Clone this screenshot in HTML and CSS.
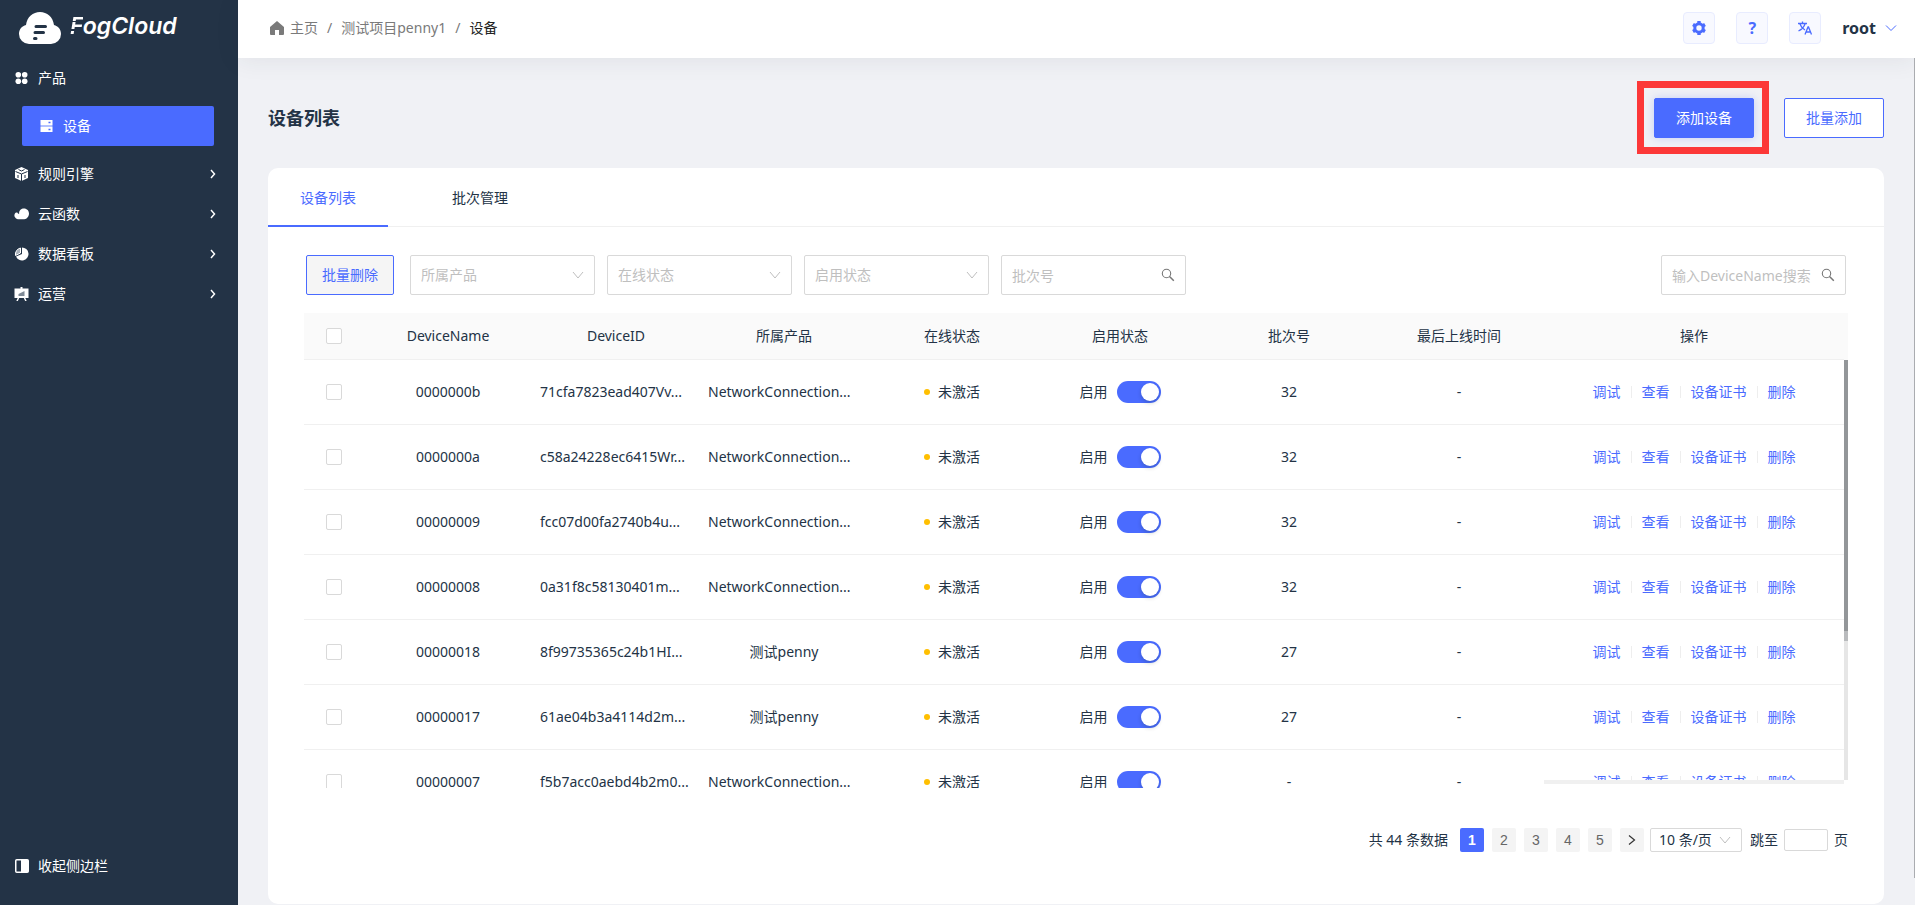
FILE: index.html
```html
<!DOCTYPE html>
<html lang="zh-CN">
<head>
<meta charset="utf-8">
<title>FogCloud</title>
<link rel="stylesheet" href="styles.css">
</head>
<body>
<svg class="defs" aria-hidden="true">
  <symbol id="down" viewBox="0 0 12 12"><path d="M1 3l5 6 5-6" fill="none" stroke="currentColor"/></symbol>
  <symbol id="right" viewBox="0 0 12 12"><path d="M4 2l3.500 4L4 10" fill="none" stroke="currentColor" stroke-width="1.500"/></symbol>
  <symbol id="search" viewBox="0 0 14 14"><circle cx="5.500" cy="5.500" r="4.200" fill="none" stroke="currentColor" stroke-width="1.100"/><path d="M8.500 8.500l4.300 4.300" stroke="currentColor" stroke-width="1.500"/></symbol>
</svg>
<div class="app">
  <aside class="sidebar">
    <a class="logo" href="#">
      <svg width="42" height="32" viewBox="0 0 42 32"><path d="M10 32a10 10 0 0 1-10-10c0-5 3-8 7-9C8 5 14 0 21 0s13 5 14 13c4 1 7 4 7 9a10 10 0 0 1-10 10z" fill="#fff"/><path d="M17 14.500h9.500M16 20.500h8.500M15.500 26.500h1.500" stroke="#233346" stroke-width="3" stroke-linecap="round"/></svg>
      <span class="brand"><span class="brand-f">F</span>ogCloud</span>
    </a>
    <nav class="menu">
      <a class="item" href="#"><svg width="14" height="14" viewBox="0 0 14 14" fill="#fff"><circle cx="3.800" cy="3.800" r="2.800"/><circle cx="10.200" cy="3.800" r="2.800"/><circle cx="3.800" cy="10.200" r="2.800"/><circle cx="10.200" cy="10.200" r="2.800"/></svg><span>产品</span></a>
      <a class="item active" href="#"><svg width="14" height="14" viewBox="0 0 14 14"><path d="M1 1h12v5H1zM1 8h12v5H1z" fill="#fff"/><path d="M1 6h12v2H1z" fill="#b3c2ff"/><path d="M9 3.500h2M9 10.500h2" stroke="#4a6bff" stroke-width="1.500"/></svg><span>设备</span></a>
      <a class="item" href="#"><svg width="14" height="14" viewBox="0 0 14 14"><path d="M7 0l6.500 3v8L7 14 .5 11V3z" fill="#fff"/><path d="M1 4.500L7 7l6-2.500M7 7v7M4 2.500l3 1.500 3-1.500M3.500 8v3M10.500 8v3" stroke="#233346" fill="none"/></svg><span>规则引擎</span><svg class="arrow"><use href="#right"/></svg></a>
      <a class="item" href="#"><svg width="16" height="14" viewBox="0 0 16 14"><path d="M4 12.500a4 4 0 0 1-3-6 2 2 0 0 1 2.500-1C4 6.500 4.500 7 5.500 7 5 3.500 7.500 1 10.500 1 14 1 16 3.500 16 6.500s-2 6-5 6z" fill="#fff"/></svg><span>云函数</span><svg class="arrow"><use href="#right"/></svg></a>
      <a class="item" href="#"><svg width="14" height="14" viewBox="0 0 14 14"><path d="M7.500.5a6.500 6.500 0 1 1-6 9L7.500 7z" fill="#fff"/><path d="M6 1v5L1 8.500A6.500 6.500 0 0 1 6 1z" fill="#a8b0b9" stroke="#fff"/></svg><span>数据看板</span><svg class="arrow"><use href="#right"/></svg></a>
      <a class="item" href="#"><svg width="14" height="14" viewBox="0 0 14 14"><path d="M0 1.500h6V0h2v1.500h6V11H0z" fill="#fff"/><path d="M4 11l-1.500 3M10 11l1.500 3" stroke="#fff" stroke-width="1.500"/><path d="M4 9V7l2-1 4-2v5z" fill="#7f8a96"/></svg><span>运营</span><svg class="arrow"><use href="#right"/></svg></a>
    </nav>
    <button class="collapse" type="button"><svg width="14" height="14" viewBox="0 0 14 14"><rect x=".75" y=".75" width="12.500" height="12.500" rx="1" fill="none" stroke="#fff" stroke-width="1.500"/><path d="M6 1h7v12H6z" fill="#fff"/></svg><span>收起侧边栏</span></button>
  </aside>
  <div class="page">
    <header class="topbar">
      <nav class="crumbs">
        <a href="#"><svg width="14" height="14" viewBox="0 0 14 14"><path d="M7 0l7 6v7a1 1 0 0 1-1 1H9V9H5v5H1a1 1 0 0 1-1-1V6z" fill="#7a7a7a"/></svg>主页</a>
        <span>/</span><a href="#">测试项目penny1</a><span>/</span><b>设备</b>
      </nav>
      <div class="tools">
        <button type="button" aria-label="设置"><svg width="14" height="14" viewBox="0 0 14 14"><circle cx="7" cy="7" r="4.200" fill="none" stroke="#4a6bff" stroke-width="3"/><path d="M7 0v3M7 11v3M1 3.500L3.500 5M10.500 9l2.500 1.500M1 10.500L3.500 9M10.500 5L13 3.500" stroke="#4a6bff" stroke-width="3.400"/></svg></button>
        <button type="button" class="help">?</button>
        <button type="button" aria-label="语言"><svg width="14" height="14" viewBox="0 0 14 14" fill="none" stroke="#4a6bff" stroke-width="1.300"><path d="M0 2.500h9M4.500.5v2M2 3c1 3 3 5 5 6M7 3C6 6 3.500 8.500.5 10M7 13.500l3-7.500h.500l3 7.500M8 11h5"/></svg></button>
        <button type="button" class="user">root<svg width="12" height="12" viewBox="0 0 12 12"><path d="M1 3.500l5 5 5-5" fill="none" stroke="currentColor"/></svg></button>
      </div>
    </header>
    <main class="content">
      <div class="heading">
        <h1>设备列表</h1>
        <div class="marked"><button class="btn primary" type="button">添加设备</button></div>
        <button class="btn" type="button">批量添加</button>
      </div>
      <section class="card">
        <div class="tabs" role="tablist">
          <button class="tab on" type="button" role="tab" aria-selected="true">设备列表</button>
          <button class="tab" type="button" role="tab" aria-selected="false">批次管理</button>
        </div>
        <div class="filters">
          <button class="btn muted" type="button">批量删除</button>
          <label class="field"><select aria-label="所属产品"><option>所属产品</option></select><svg width="12" height="12"><use href="#down"/></svg></label>
          <label class="field"><select aria-label="在线状态"><option>在线状态</option></select><svg width="12" height="12"><use href="#down"/></svg></label>
          <label class="field"><select aria-label="启用状态"><option>启用状态</option></select><svg width="12" height="12"><use href="#down"/></svg></label>
          <label class="field find"><input type="text" placeholder="批次号" aria-label="批次号"><svg width="14" height="14"><use href="#search"/></svg></label>
          <label class="field find last"><input type="text" placeholder="输入DeviceName搜索" aria-label="输入DeviceName搜索"><svg width="14" height="14"><use href="#search"/></svg></label>
        </div>
        <div class="grid">
          <table>
            <colgroup><col class="c-check"><col class="c-data"><col class="c-data"><col class="c-data"><col class="c-data"><col class="c-data"><col><col><col class="c-act"></colgroup>
            <thead><tr><th><input type="checkbox" class="tick" aria-label="全选"></th><th>DeviceName</th><th>DeviceID</th><th>所属产品</th><th>在线状态</th><th>启用状态</th><th>批次号</th><th>最后上线时间</th><th>操作</th></tr></thead>
            <tbody>
              <tr><td><input type="checkbox" class="tick" aria-label="0000000b"></td><td>0000000b</td><td class="long">71cfa7823ead407Vv...</td><td class="long">NetworkConnection...</td><td><span class="state">未激活</span></td><td><label class="toggle">启用<input type="checkbox" role="switch" checked></label></td><td>32</td><td>-</td><td><div class="acts"><a href="#">调试</a><a href="#">查看</a><a href="#">设备证书</a><a href="#">删除</a></div></td></tr>
              <tr><td><input type="checkbox" class="tick" aria-label="0000000a"></td><td>0000000a</td><td class="long">c58a24228ec6415Wr...</td><td class="long">NetworkConnection...</td><td><span class="state">未激活</span></td><td><label class="toggle">启用<input type="checkbox" role="switch" checked></label></td><td>32</td><td>-</td><td><div class="acts"><a href="#">调试</a><a href="#">查看</a><a href="#">设备证书</a><a href="#">删除</a></div></td></tr>
              <tr><td><input type="checkbox" class="tick" aria-label="00000009"></td><td>00000009</td><td class="long">fcc07d00fa2740b4u...</td><td class="long">NetworkConnection...</td><td><span class="state">未激活</span></td><td><label class="toggle">启用<input type="checkbox" role="switch" checked></label></td><td>32</td><td>-</td><td><div class="acts"><a href="#">调试</a><a href="#">查看</a><a href="#">设备证书</a><a href="#">删除</a></div></td></tr>
              <tr><td><input type="checkbox" class="tick" aria-label="00000008"></td><td>00000008</td><td class="long">0a31f8c58130401m...</td><td class="long">NetworkConnection...</td><td><span class="state">未激活</span></td><td><label class="toggle">启用<input type="checkbox" role="switch" checked></label></td><td>32</td><td>-</td><td><div class="acts"><a href="#">调试</a><a href="#">查看</a><a href="#">设备证书</a><a href="#">删除</a></div></td></tr>
              <tr><td><input type="checkbox" class="tick" aria-label="00000018"></td><td>00000018</td><td class="long">8f99735365c24b1HI...</td><td>测试penny</td><td><span class="state">未激活</span></td><td><label class="toggle">启用<input type="checkbox" role="switch" checked></label></td><td>27</td><td>-</td><td><div class="acts"><a href="#">调试</a><a href="#">查看</a><a href="#">设备证书</a><a href="#">删除</a></div></td></tr>
              <tr><td><input type="checkbox" class="tick" aria-label="00000017"></td><td>00000017</td><td class="long">61ae04b3a4114d2m...</td><td>测试penny</td><td><span class="state">未激活</span></td><td><label class="toggle">启用<input type="checkbox" role="switch" checked></label></td><td>27</td><td>-</td><td><div class="acts"><a href="#">调试</a><a href="#">查看</a><a href="#">设备证书</a><a href="#">删除</a></div></td></tr>
              <tr><td><input type="checkbox" class="tick" aria-label="00000007"></td><td>00000007</td><td class="long">f5b7acc0aebd4b2m0...</td><td class="long">NetworkConnection...</td><td><span class="state">未激活</span></td><td><label class="toggle">启用<input type="checkbox" role="switch" checked></label></td><td>-</td><td>-</td><td><div class="acts"><a href="#">调试</a><a href="#">查看</a><a href="#">设备证书</a><a href="#">删除</a></div></td></tr>
            </tbody>
          </table>
          <div class="vbar"></div>
          <div class="hbar"></div>
        </div>
        <nav class="pager">
          <span class="total">共 44 条数据</span>
          <button type="button" class="num current">1</button>
          <button type="button" class="num">2</button>
          <button type="button" class="num">3</button>
          <button type="button" class="num">4</button>
          <button type="button" class="num">5</button>
          <button type="button" class="num next" aria-label="下一页"><svg width="12" height="12" viewBox="0 0 12 12"><path d="M3 1.500L8.500 6 3 10.500" fill="none" stroke="#333" stroke-width="1.200"/></svg></button>
          <label class="size"><select aria-label="每页条数"><option>10 条/页</option></select><svg width="12" height="12"><use href="#down"/></svg></label>
          <label class="jump">跳至<input type="text">页</label>
        </nav>
      </section>
      <div class="pagebar"></div>
    </main>
  </div>
</div>
</body>
</html>
```
FILE: styles.css
```css
* { box-sizing: border-box; }
body {
  margin: 0;
  color: #233346;
  font: 14px/22px "Noto Sans", "Noto Sans CJK SC", sans-serif;
}
button, input, select { font: inherit; color: inherit; margin: 0; }
button { cursor: pointer; }
a { color: inherit; text-decoration: none; }
svg { flex: none; }
.defs { position: absolute; width: 0; height: 0; }
.app { display: flex; height: 100vh; background: #f0f1f5; overflow: hidden; }

.sidebar {
  display: flex;
  flex-direction: column;
  flex: none;
  width: 238px;
  background: #233346;
  color: #fff;
}
.logo { display: flex; gap: 9px; height: 58px; padding: 12px 0 0 19px; }
.brand { font: italic 600 23px/28px Inter, sans-serif; }
.brand-f {
  background: linear-gradient(#fff 9px, #233346 9px, #233346 10px, #fff 10px, #fff 17px, #233346 17px, #233346 19px, #fff 19px);
  background-clip: text;
  color: transparent;
}
.menu { flex: 1; }
.item { display: flex; align-items: center; gap: 9px; height: 40px; padding-left: 14px; }
.item > svg:first-child { width: 15px; }
.item span { flex: 1; }
.item.active {
  margin: 8px 24px 8px 22px;
  padding-left: 17px;
  background: #4a6bff;
  border-radius: 2px;
}
.arrow { width: 12px; height: 12px; margin-right: 19px; }
.collapse {
  display: flex;
  align-items: center;
  gap: 9px;
  height: 40px;
  margin-bottom: 19px;
  padding: 0 0 0 15px;
  border: 0;
  background: none;
}

.page { display: flex; flex: 1; flex-direction: column; min-width: 0; }
.topbar {
  display: flex;
  align-items: center;
  justify-content: space-between;
  height: 58px;
  padding: 0 18px 2px 32px;
  background: #fff;
  box-shadow: 0 2px 24px rgba(35, 51, 70, .08);
}
.crumbs { display: flex; gap: 9px; color: #7a7a7a; }
.crumbs a { display: flex; align-items: center; gap: 6px; }
.crumbs b { color: #222; font-weight: 400; }
.tools { display: flex; align-items: center; gap: 21px; }
.tools button {
  display: flex;
  align-items: center;
  justify-content: center;
  width: 32px;
  height: 32px;
  padding: 0;
  border: 1px solid #e8ecff;
  border-radius: 4px;
  background: #f8f9ff;
}
.tools .help { color: #4a6bff; font-size: 16px; font-weight: 700; }
.tools .user { gap: 9px; width: auto; border: 0; background: none; font-size: 16px; font-weight: 700; }
.user svg { color: #4a6bff; }

.content {
  position: relative;
  display: flex;
  flex: 1;
  flex-direction: column;
  padding: 0 31px 1px 30px;
}
.heading { display: flex; align-items: center; gap: 30px; padding: 40px 0 30px; }
h1 { flex: 1; margin: 0; font-size: 18px; line-height: 26px; font-weight: 700; }
.btn {
  width: 100px;
  height: 40px;
  padding: 0;
  border: 1px solid #4a6bff;
  border-radius: 2px;
  background: #fff;
  color: #4a6bff;
}
.btn.primary { display: block; background: #4a6bff; color: #fff; box-shadow: 0 0 8px rgba(74, 107, 255, .25); }
.btn.muted { width: 88px; margin-right: 4px; background: #f5f5f5; }
.marked { position: relative; }
.marked::after { content: ""; position: absolute; inset: -17px -15px -16px -17px; border: 7px solid #fc3838; pointer-events: none; }

.card { display: flex; flex: 1; flex-direction: column; background: #fff; border-radius: 10px; }
.tabs { display: flex; gap: 32px; height: 59px; border-bottom: 1px solid #f0f0f0; }
.tab { width: 120px; height: 59px; padding: 2px 0 0; border: 0; border-bottom: 2px solid transparent; background: none; }
.tab.on { border-color: #4a6bff; color: #4a6bff; }

.filters { display: flex; gap: 12px; padding: 28px 38px 18px; }
.field { position: relative; width: 185px; height: 40px; }
.field select, .field input {
  width: 100%;
  height: 40px;
  padding: 0 10px;
  border: 1px solid #d9d9d9;
  border-radius: 2px;
  background: #fff;
  color: #bfbfbf;
  appearance: none;
  outline: 0;
}
::placeholder { color: #bfbfbf; opacity: 1; }
.field svg { position: absolute; top: 14px; right: 11px; color: #bfbfbf; pointer-events: none; }
.field.find svg { top: 13px; right: 11px; color: #777; }
.last { margin-left: auto; }

.grid { position: relative; height: 475px; margin: 0 36px; overflow: hidden; }
table { width: calc(100% - 4px); border-collapse: separate; border-spacing: 0; table-layout: fixed; }
.c-check { width: 60px; }
.c-data { width: 168px; }
.c-act { width: 300px; }
th, td { padding: 0 8px; border-bottom: 1px solid #f0f0f0; text-align: center; white-space: nowrap; font-weight: 400; }
th { height: 47px; background: #fafafa; }
th:last-child { box-shadow: 4px 0 0 #fafafa; }
td { height: 65px; }
.long { text-align: left; }
.tick {
  display: block;
  width: 16px;
  height: 16px;
  margin: 0 auto;
  appearance: none;
  border: 1px solid #d9d9d9;
  border-radius: 2px;
  background: #fff;
}
.state::before { content: ""; display: inline-block; width: 6px; height: 6px; margin-right: 8px; border-radius: 50%; background: #ffbf00; vertical-align: 2px; }
.toggle { display: flex; align-items: center; justify-content: center; gap: 9px; }
.toggle input { width: 44px; height: 22px; padding: 2px; appearance: none; border-radius: 11px; background: #4a6bff; }
.toggle input::before {
  content: "";
  display: block;
  width: 18px;
  height: 18px;
  margin-left: auto;
  border-radius: 50%;
  background: #fff;
  box-shadow: 0 2px 4px rgba(0, 35, 11, .2);
}
.acts { display: flex; justify-content: center; align-items: center; color: #4a6bff; }
.acts a + a::before { content: ""; display: inline-block; width: 1px; height: 12px; margin: 0 10px; background: #eee; vertical-align: -1px; }
.vbar { position: absolute; top: 47px; right: 0; bottom: 8px; width: 4px; background: linear-gradient(#939699 271px, #b9bbbd 271px, #b9bbbd 281px, #e6e6e6 281px); }
.hbar { position: absolute; right: 4px; bottom: 0; width: 300px; height: 8px; border-bottom: 4px solid #fff; background: #f0f0f0; }

.pager { display: flex; align-items: center; gap: 8px; justify-content: flex-end; padding: 40px 36px 0; }
.total { margin-right: 4px; }
.num {
  width: 24px;
  height: 24px;
  padding: 0;
  border: 0;
  border-radius: 2px;
  background: #f4f4f4;
  color: #666;
  font-family: "Liberation Sans", sans-serif;
}
.num.current { background: #4a6bff; color: #fff; font-weight: 700; }
.num.next { display: flex; align-items: center; justify-content: center; margin-right: -2px; }
.size { position: relative; }
.size select {
  display: block;
  width: 92px;
  height: 24px;
  padding: 0 8px;
  border: 1px solid #d9d9d9;
  border-radius: 2px;
  background: #fff;
  line-height: 20px;
  appearance: none;
}
.size svg { position: absolute; top: 6px; right: 11px; color: #bfbfbf; pointer-events: none; }
.jump { display: flex; align-items: center; gap: 6px; }
.jump input { width: 44px; height: 22px; padding: 0 4px; border: 1px solid #d9d9d9; border-radius: 2px; }
.pagebar { position: absolute; top: 0; right: 0; bottom: 27px; width: 1px; background: #aaacb0; }
```
